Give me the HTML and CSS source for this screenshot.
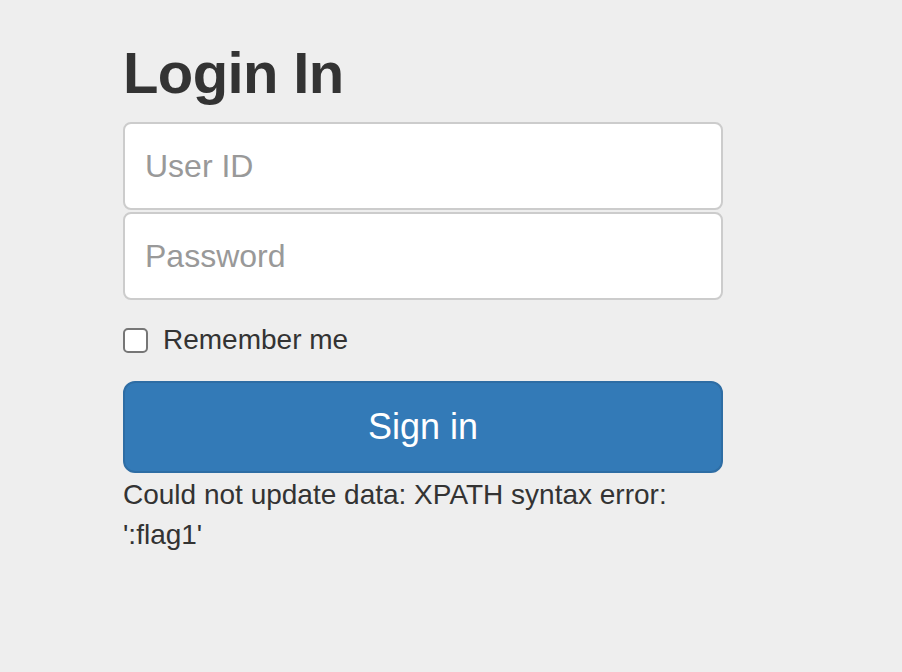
FILE: index.html
```html
<!DOCTYPE html>
<html lang="en">
<head>
  <meta charset="UTF-8">
  <meta name="viewport" content="width=device-width, initial-scale=1.0">
  <title>Login In</title>
<link rel="stylesheet" href="styles.css">
</head>
<body>
  <form class="form-signin" action="login.php" method="post">
    <h2 class="form-signin-heading">Login In</h2>
    <input type="text" name="userid" class="form-control" placeholder="User ID">
    <input type="password" name="password" class="form-control" placeholder="Password">
    <div class="checkbox">
      <label><input type="checkbox" name="remember"> Remember me</label>
    </div>
    <button class="btn" type="submit">Sign in</button>
    <p class="result">Could not update data: XPATH syntax error: ':flag1'</p>
  </form>
</body>
</html>
```

FILE: styles.css
```css
body {
  margin: 0;
  background-color: #eee;
  font-family: "Liberation Sans", Arial, sans-serif;
  font-size: 28px;
  line-height: 40px;
  color: #333;
}

.form-signin {
  width: 600px;
  margin-left: 123px;
  padding-top: 40px;
}

.form-signin-heading {
  margin: 0 0 16px;
  font-size: 58px;
  line-height: 66px;
  font-weight: bold;
  letter-spacing: -0.6px;
}

.form-control {
  display: block;
  box-sizing: border-box;
  width: 100%;
  height: 88px;
  margin: 0 0 2px;
  padding: 0 20px;
  font-family: inherit;
  font-size: 32px;
  color: #555;
  background-color: #fff;
  border: 2px solid #ccc;
  border-radius: 8px;
  outline: none;
}

.form-control::placeholder {
  color: #999;
}

.checkbox {
  margin-top: 20px;
}

.checkbox label {
  display: flex;
  align-items: center;
  gap: 15px;
  cursor: pointer;
}

.checkbox input {
  appearance: none;
  width: 25px;
  height: 25px;
  margin: 0;
  background-color: #fff;
  border: 2px solid #767676;
  border-radius: 5px;
}

.btn {
  display: block;
  box-sizing: border-box;
  width: 100%;
  height: 92px;
  margin-top: 21px;
  font-family: inherit;
  font-size: 36px;
  color: #fff;
  background-color: #337ab7;
  border: 2px solid #2e6da4;
  border-radius: 12px;
  cursor: pointer;
}

.result {
  margin: 2px 0 0;
}
```
